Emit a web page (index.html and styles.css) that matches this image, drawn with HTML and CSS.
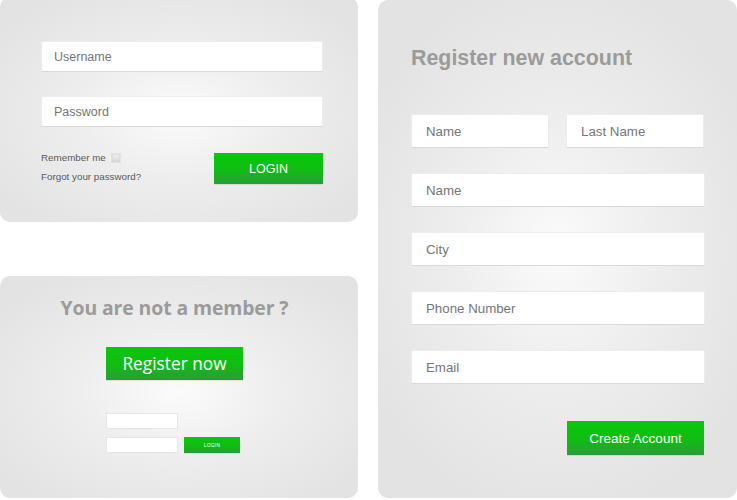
FILE: index.html
```html
<!DOCTYPE html>
<html lang="en">
<head>
<meta charset="utf-8">
<title>Login and register</title>
<link rel="stylesheet" href="styles.css">
</head>
<body>
<div class="page">
  <div class="left-col">
    <section class="panel login-panel">
      <input class="field" type="text" placeholder="Username">
      <input class="field pass" type="password" placeholder="Password">
      <div class="login-row">
        <div class="login-links">
          <span class="remember">Remember me <span class="check"></span></span>
          <span class="forgot">Forgot your password?</span>
        </div>
        <button class="btn login-btn">LOGIN</button>
      </div>
    </section>
    <section class="panel member-panel">
      <h2 class="member-title">You are not a member ?</h2>
      <button class="btn register-btn">Register now</button>
      <div class="mini-form">
        <div class="mini-field"></div>
        <div class="mini-row">
          <div class="mini-field"></div>
          <button class="btn mini-btn">LOGIN</button>
        </div>
      </div>
    </section>
  </div>
  <section class="panel register-panel">
    <h1 class="reg-title">Register new account</h1>
    <div class="reg-fields">
      <div class="reg-row">
        <input class="rfield" type="text" placeholder="Name">
        <input class="rfield" type="text" placeholder="Last Name">
      </div>
      <input class="rfield" type="text" placeholder="Name">
      <input class="rfield" type="text" placeholder="City">
      <input class="rfield" type="text" placeholder="Phone Number">
      <input class="rfield" type="text" placeholder="Email">
    </div>
    <div class="reg-actions">
      <button class="btn create-btn">Create Account</button>
    </div>
  </section>
</div>
</body>
</html>
```

FILE: styles.css
```css
* { box-sizing: border-box; }
html, body {
  margin: 0;
  padding: 0;
  background: #ffffff;
  width: 737px;
  height: 500px;
  overflow: hidden;
  font-family: "Liberation Sans", Arial, sans-serif;
}
.page {
  display: flex;
  gap: 20px;
  width: 737px;
  height: 500px;
}
.left-col {
  width: 358px;
  display: flex;
  flex-direction: column;
  gap: 54px;
}
.panel {
  border-radius: 10px;
  background: radial-gradient(ellipse 62% 62% at 50% 52%, #fbfbfb 0%, #eeeeee 45%, #e3e3e3 100%);
}
.login-panel {
  margin-top: -3px;
  height: 225px;
  padding: 44px 35px 0 41px;
  display: flex;
  flex-direction: column;
}
.field {
  display: block;
  width: 282px;
  height: 31px;
  border: 1px solid #ececec;
  border-bottom-color: #d9d9d9;
  background: #fff;
  padding: 0 0 0 12px;
  font-family: "Liberation Sans", Arial, sans-serif;
  font-size: 12.5px;
  color: #777;
  outline: none;
}
.field::placeholder { color: #767676; font-family: "Liberation Sans", Arial, sans-serif; }
.pass { margin-top: 24px; }
.login-row {
  margin-top: 26px;
  display: flex;
  justify-content: space-between;
  align-items: flex-start;
}
.login-links {
  display: flex;
  flex-direction: column;
  gap: 5px;
  margin-top: -2px;
  font-size: 9.8px;
  line-height: 14px;
  color: #5a5a5a;
}
.remember { display: flex; align-items: center; }
.check {
  display: inline-block;
  width: 10px;
  height: 10px;
  margin-left: 5px;
  background: linear-gradient(#f2f2f2, #dadada);
  border: 1px solid #e2e2e2;
  box-shadow: inset 0 0 2px #c8c8c8;
}
.btn {
  border: none;
  padding: 0;
  color: #fff;
  cursor: pointer;
  background: linear-gradient(#0bc60b 0%, #10bd13 55%, #2c9a3c 100%);
  box-shadow: 0 1px 0 rgba(0,0,0,0.08);
}
.login-btn {
  width: 109px;
  height: 31px;
  font-family: "Liberation Sans", Arial, sans-serif;
  font-size: 12.5px;
}
.member-panel {
  height: 222px;
  padding: 17px 9px 0 0;
  display: flex;
  flex-direction: column;
  align-items: center;
}
.member-title {
  margin: 0;
  font-family: "Open Sans", "Liberation Sans", sans-serif;
  font-weight: 700;
  font-size: 19.4px;
  line-height: 30px;
  color: #9b9b9b;
  letter-spacing: -0.1px;
}
.register-btn {
  margin-top: 24px;
  width: 137px;
  height: 33px;
  font-family: "Open Sans", "Liberation Sans", sans-serif;
  font-size: 17.3px;
  line-height: 33px;
}
.mini-form {
  margin-top: 33px;
  width: 137px;
  display: flex;
  flex-direction: column;
  gap: 8px;
  padding-right: 3px;
}
.mini-field {
  width: 72px;
  height: 16px;
  background: #fff;
  border: 1px solid #e6e6e6;
}
.mini-row {
  display: flex;
  gap: 6px;
}
.mini-btn {
  width: 56px;
  height: 16px;
  font-family: "Open Sans", "Liberation Sans", sans-serif;
  font-size: 5px;
  line-height: 16px;
  letter-spacing: 0.2px;
}
.register-panel {
  width: 359px;
  height: 498px;
  padding: 46px 33px 0 33px;
  background: radial-gradient(ellipse 60% 55% at 50% 50%, #fbfbfb 0%, #eeeeee 45%, #e3e3e3 100%);
}
.reg-title {
  margin: 0;
  font-size: 21.4px;
  line-height: 24px;
  font-weight: 700;
  color: #9b9b9b;
}
.reg-fields {
  margin-top: 44px;
  display: flex;
  flex-direction: column;
  gap: 25px;
}
.reg-row {
  display: flex;
  justify-content: space-between;
}
.rfield {
  display: block;
  width: 294px;
  height: 34px;
  border: 1px solid #ececec;
  border-bottom-color: #d9d9d9;
  background: #fff;
  padding: 0 0 0 14px;
  font-family: "Liberation Sans", Arial, sans-serif;
  font-size: 13.3px;
  color: #777;
  outline: none;
}
.reg-row .rfield { width: 138px; }
.rfield::placeholder { color: #767676; font-family: "Liberation Sans", Arial, sans-serif; }
.reg-actions {
  margin-top: 37px;
  display: flex;
  justify-content: flex-end;
}
.create-btn {
  width: 137px;
  height: 34px;
  font-family: "Liberation Sans", Arial, sans-serif;
  font-size: 13.5px;
}
```
